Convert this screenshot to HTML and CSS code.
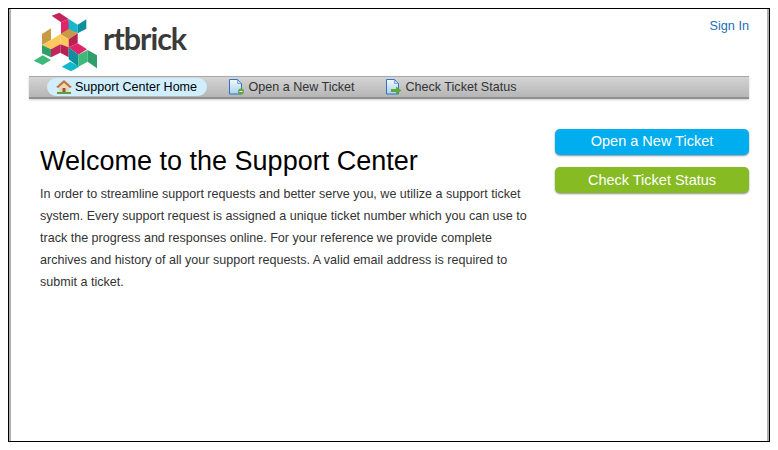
FILE: index.html
```html
<!DOCTYPE html>
<html lang="en">
<head>
<meta charset="utf-8">
<title>Support Center</title>
<link rel="stylesheet" href="styles.css">
</head>
<body>
<div class="frame">
  <header class="header">
    <a class="logo" href="#">
      <svg class="logo-mark" width="70" height="65" viewBox="0 0 210 195">
        <polygon fill="#c2255c" points="62,17 85,8 113,27 90,37"/>
        <polygon fill="#e0246a" points="90,37 113,27 115,62 90,74"/>
        <polygon fill="#12b8cc" points="113,27 140,44 140,70 113,60"/>
        <polygon fill="#0f8f9c" points="140,44 166,28 166,56 140,70"/>
        <polygon fill="#c99a45" points="33,72 60,55 60,90 33,105"/>
        <polygon fill="#fdc85c" points="33,105 60,90 88,72 88,105 60,118"/>
        <polygon fill="#2f9e68" points="33,105 60,118 60,142 33,130"/>
        <polygon fill="#c2255c" points="60,118 88,103 88,128 60,142"/>
        <polygon fill="#c99a45" points="88,72 113,57 140,70 113,88"/>
        <polygon fill="#fdc85c" points="88,72 113,88 113,112 88,103"/>
        <polygon fill="#b8204f" points="113,88 140,70 140,100 113,112"/>
        <polygon fill="#b8204f" points="88,103 113,112 113,142 88,128"/>
        <polygon fill="#e0246a" points="113,112 140,100 168,118 142,134"/>
        <polygon fill="#0f8f9c" points="113,112 142,134 142,170 113,148"/>
        <polygon fill="#3dba78" points="142,134 170,120 170,155 142,170"/>
        <polygon fill="#2f9e68" points="170,120 198,136 198,175 170,155"/>
        <polygon fill="#3dba78" points="8,152 35,136 60,150 35,165"/>
        <polygon fill="#12b8cc" points="92,170 118,155 145,170 120,184"/>
      </svg>
      <span class="logo-word">rtbrick</span>
    </a>
    <a class="sign-in" href="#">Sign In</a>
  </header>
  <nav class="nav">
    <a class="nav-item active" href="#">
      <svg class="nav-icon" width="16" height="16" viewBox="0 0 16 16">
        <polygon fill="#c9743e" points="8,1 0,8 2.500,9 8,4 13.500,9 16,8"/>
        <polygon fill="#e8d9b5" points="3,8.500 8,4.300 13,8.500 13,13 3,13"/>
        <rect fill="#96592f" x="6.500" y="9" width="3" height="4"/>
        <rect fill="#5f9c45" x="1" y="13" width="14" height="2"/>
      </svg>
      Support Center Home
    </a>
    <a class="nav-item" href="#">
      <svg class="nav-icon" width="16" height="16" viewBox="0 0 16 16">
        <defs>
          <linearGradient id="doc-fill" x1="0" y1="0" x2="0" y2="1">
            <stop offset="0" stop-color="#f4f9fd"/>
            <stop offset="1" stop-color="#a9d0f0"/>
          </linearGradient>
        </defs>
        <path fill="url(#doc-fill)" stroke="#2f74bd" d="M0.500.500h8l4 4v10.500h-12z"/>
        <path fill="#bcd6ee" stroke="#2f74bd" stroke-width="0.500" d="M8.500.500v4h4z"/>
        <circle fill="#5fa83f" cx="12" cy="12.500" r="3"/>
        <rect fill="#fff" x="10.500" y="12" width="3" height="1"/>
      </svg>
      Open a New Ticket
    </a>
    <a class="nav-item" href="#">
      <svg class="nav-icon" width="16" height="16" viewBox="0 0 16 16">
        <path fill="url(#doc-fill)" stroke="#2f74bd" d="M0.500.500h8l4 4v10.500h-12z"/>
        <path fill="#bcd6ee" stroke="#2f74bd" stroke-width="0.500" d="M8.500.500v4h4z"/>
        <polygon fill="#5fa83f" points="5,10 10,10 10,7.500 15.500,11.500 10,15.500 10,13 5,13"/>
      </svg>
      Check Ticket Status
    </a>
  </nav>
  <main class="content">
    <section class="welcome">
      <h1 class="welcome-title">Welcome to the Support Center</h1>
      <p class="welcome-text">In order to streamline support requests and better serve you, we utilize a support ticket system. Every support request is assigned a unique ticket number which you can use to track the progress and responses online. For your reference we provide complete archives and history of all your support requests. A valid email address is required to submit a ticket.</p>
    </section>
    <aside class="actions">
      <a class="btn btn-blue" href="#">Open a New Ticket</a>
      <a class="btn btn-green" href="#">Check Ticket Status</a>
    </aside>
  </main>
</div>
</body>
</html>
```
FILE: styles.css
```css
html, body {
  margin: 0;
  padding: 0;
  background: #fff;
}
body {
  padding: 8px;
  font-family: "Liberation Sans", Arial, sans-serif;
  color: #000;
}
a {
  text-decoration: none;
}
.frame {
  box-sizing: border-box;
  width: 762px;
  height: 434px;
  border: 1px solid #000;
  box-shadow: inset 2px 0 0 #b0b0b0, inset -2px 0 0 #b0b0b0;
  padding: 0 20px;
}
.header {
  display: flex;
  justify-content: space-between;
  height: 67px;
}
.logo {
  display: flex;
  align-items: flex-start;
  margin-left: 2px;
  padding-top: 1px;
}
.logo-mark {
  display: block;
}
.logo-word {
  margin: 9px 0 0 2px;
  font-family: Lato, sans-serif;
  font-size: 30.5px;
  line-height: 38px;
  font-weight: 700;
  letter-spacing: -1px;
  color: #3a3a3a;
}
.sign-in {
  margin-top: 9px;
  font-size: 12.7px;
  line-height: 16px;
  color: #1b6fb5;
}
.nav {
  box-sizing: border-box;
  height: 23px;
  display: flex;
  align-items: center;
  gap: 13px;
  padding-left: 18px;
  border-top: 1px solid #a8a8a8;
  border-bottom: 2px solid #8f8f8f;
  background: linear-gradient(#d4d4d4, #b6b6b6);
  box-shadow: 0 1px 2px rgba(0, 0, 0, 0.2);
}
.nav-item {
  display: flex;
  align-items: center;
  gap: 4px;
  height: 18px;
  padding: 0 9px;
  border-radius: 9px;
  font-size: 12.55px;
  color: #333;
}
.nav-item.active {
  gap: 3px;
  padding-right: 9.5px;
  background: #d1eeff;
  color: #000;
}
.content {
  display: flex;
  justify-content: space-between;
  align-items: flex-start;
}
.welcome {
  width: 490px;
  margin: 44px 0 0 11px;
}
.welcome-title {
  margin: 0;
  font-size: 27px;
  line-height: 36px;
  font-weight: 400;
}
.welcome-text {
  margin: 4px 0 0;
  font-size: 12.55px;
  line-height: 22px;
  color: #333;
}
.actions {
  display: flex;
  flex-direction: column;
  gap: 12px;
  width: 194px;
  margin-top: 30px;
}
.btn {
  height: 26px;
  border-radius: 5px;
  box-shadow: 0 1px 2px rgba(0, 0, 0, 0.45);
  font-size: 14.5px;
  line-height: 25px;
  text-align: center;
  color: #fff;
}
.btn-blue {
  background: #00aeef;
}
.btn-green {
  background: #86bb23;
  line-height: 27px;
}
```
